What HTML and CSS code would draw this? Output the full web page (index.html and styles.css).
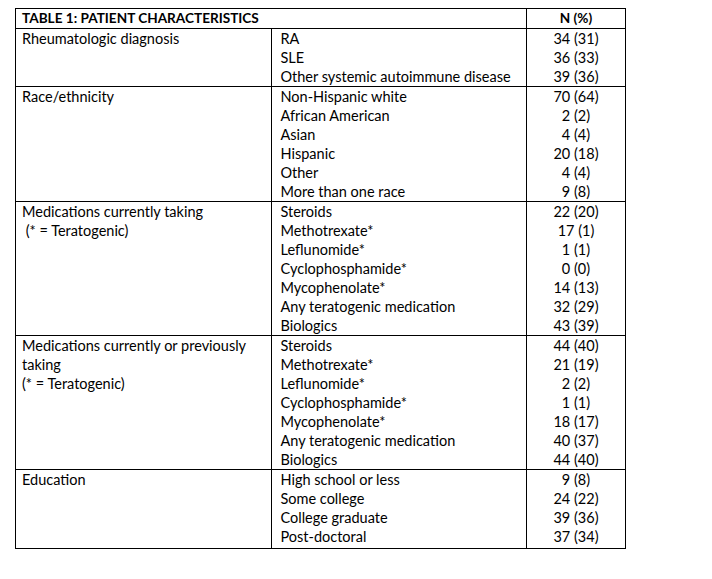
FILE: index.html
```html
<!DOCTYPE html>
<html lang="en">
<head>
<meta charset="utf-8">
<title>Table 1: Patient Characteristics</title>
<link rel="stylesheet" href="styles.css">
</head>
<body>
<table class="chars">
  <thead>
    <tr>
      <th class="title" colspan="2">TABLE 1: PATIENT CHARACTERISTICS</th>
      <th class="num">N (%)</th>
    </tr>
  </thead>
  <tbody>
    <tr>
      <td class="cat">Rheumatologic diagnosis</td>
      <td class="items"><div>RA</div><div>SLE</div><div>Other systemic autoimmune disease</div></td>
      <td class="vals"><div>34 (31)</div><div>36 (33)</div><div>39 (36)</div></td>
    </tr>
    <tr>
      <td class="cat">Race/ethnicity</td>
      <td class="items"><div>Non-Hispanic white</div><div>African American</div><div>Asian</div><div>Hispanic</div><div>Other</div><div>More than one race</div></td>
      <td class="vals"><div>70 (64)</div><div>2 (2)</div><div>4 (4)</div><div>20 (18)</div><div>4 (4)</div><div>9 (8)</div></td>
    </tr>
    <tr>
      <td class="cat"><div>Medications currently taking</div><div>&nbsp;(* = Teratogenic)</div></td>
      <td class="items"><div>Steroids</div><div>Methotrexate*</div><div>Leflunomide*</div><div>Cyclophosphamide*</div><div>Mycophenolate*</div><div>Any teratogenic medication</div><div>Biologics</div></td>
      <td class="vals"><div>22 (20)</div><div>17 (1)</div><div>1 (1)</div><div>0 (0)</div><div>14 (13)</div><div>32 (29)</div><div>43 (39)</div></td>
    </tr>
    <tr>
      <td class="cat"><div>Medications currently or previously</div><div>taking</div><div>(* = Teratogenic)</div></td>
      <td class="items"><div>Steroids</div><div>Methotrexate*</div><div>Leflunomide*</div><div>Cyclophosphamide*</div><div>Mycophenolate*</div><div>Any teratogenic medication</div><div>Biologics</div></td>
      <td class="vals"><div>44 (40)</div><div>21 (19)</div><div>2 (2)</div><div>1 (1)</div><div>18 (17)</div><div>40 (37)</div><div>44 (40)</div></td>
    </tr>
    <tr>
      <td class="cat">Education</td>
      <td class="items"><div>High school or less</div><div>Some college</div><div>College graduate</div><div>Post-doctoral</div></td>
      <td class="vals"><div>9 (8)</div><div>24 (22)</div><div>39 (36)</div><div>37 (34)</div></td>
    </tr>
  </tbody>
</table>
</body>
</html>
```

FILE: styles.css
```css
html, body {
  margin: 0;
  padding: 0;
  background: #ffffff;
}

body {
  padding: 8px 0 0 15px;
  font-family: Lato, "Open Sans", "Liberation Sans", sans-serif;
  font-size: 14.5px;
  color: #000000;
}

.chars {
  border-collapse: collapse;
  width: 611px;
  table-layout: fixed;
}

.chars th,
.chars td {
  border: 1px solid #000000;
  padding: 0 6px;
  line-height: 19px;
  vertical-align: top;
  text-align: left;
  white-space: nowrap;
}

.chars th {
  font-weight: 700;
  font-size: 13.6px;
  line-height: 19px;
}

.chars .cat {
  width: 245px;
}

.chars .items {
  width: 239px;
  padding-left: 9px;
  padding-right: 4px;
}

.chars .num,
.chars .vals {
  width: 86px;
  text-align: center;
}

.chars tbody tr:last-child td {
  padding-bottom: 2px;
}
```
